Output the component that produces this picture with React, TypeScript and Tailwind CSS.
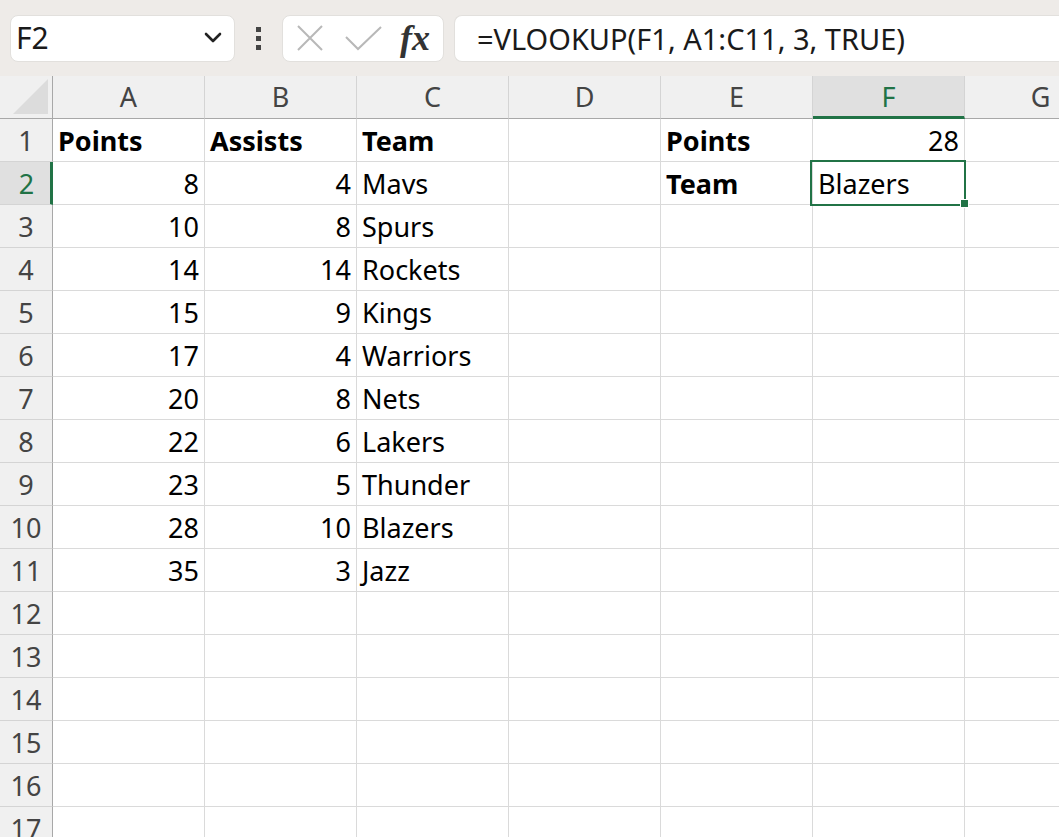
import React from 'react';

const cols = ['A', 'B', 'C', 'D', 'E', 'F', 'G'];

type Cell = { v: string; bold?: boolean; right?: boolean };

const data: Record<string, Cell> = {
  A1: { v: 'Points', bold: true },
  B1: { v: 'Assists', bold: true },
  C1: { v: 'Team', bold: true },
  E1: { v: 'Points', bold: true },
  F1: { v: '28', right: true },
  E2: { v: 'Team', bold: true },
  F2: { v: 'Blazers' },
};

const rowsData: [string, string, string][] = [
  ['8', '4', 'Mavs'],
  ['10', '8', 'Spurs'],
  ['14', '14', 'Rockets'],
  ['15', '9', 'Kings'],
  ['17', '4', 'Warriors'],
  ['20', '8', 'Nets'],
  ['22', '6', 'Lakers'],
  ['23', '5', 'Thunder'],
  ['28', '10', 'Blazers'],
  ['35', '3', 'Jazz'],
];

rowsData.forEach((r, i) => {
  const n = i + 2;
  data['A' + n] = { v: r[0], right: true };
  data['B' + n] = { v: r[1], right: true };
  data['C' + n] = { v: r[2] };
});

const font = { fontFamily: '"Segoe UI", "Noto Sans", "Open Sans", sans-serif' };

function Toolbar() {
  return (
    <div className="flex h-[76px] items-center bg-[#eeebe8] pl-[10px]">
      <div className="flex h-[47px] w-[225px] items-center justify-between rounded-[8px] border border-[#e2e0dd] bg-white pl-[5px] pr-[12px]">
        <span className="text-[30px] leading-none text-[#1a1a1a]">F2</span>
        <svg width="18" height="12" viewBox="0 0 18 12">
          <path d="M2 2 L9 9 L16 2" fill="none" stroke="#222" strokeWidth="2.6" strokeLinecap="round" strokeLinejoin="round" />
        </svg>
      </div>
      <div className="flex w-[47px] flex-col items-center gap-[4px]">
        <span className="block h-[5px] w-[5px] bg-[#444]" />
        <span className="block h-[5px] w-[5px] bg-[#444]" />
        <span className="block h-[5px] w-[5px] bg-[#444]" />
      </div>
      <div className="flex h-[47px] w-[162px] items-center rounded-[8px] border border-[#e2e0dd] bg-white pl-[13px]">
        <svg width="28" height="28" viewBox="0 0 28 28">
          <path d="M2 2 L26 26 M26 2 L2 26" stroke="#b8b8b8" strokeWidth="2" fill="none" />
        </svg>
        <svg width="38" height="28" viewBox="0 0 38 28" className="ml-[21px]">
          <path d="M1 13 L13 25 L36 3" stroke="#b8b8b8" strokeWidth="2" fill="none" />
        </svg>
        <span
          className="ml-[17px] text-[36px] font-bold italic leading-none text-[#333]"
          style={{ fontFamily: '"Liberation Serif", "DejaVu Serif", serif' }}
        >
          fx
        </span>
      </div>
      <div className="ml-[10px] flex h-[47px] flex-1 items-center rounded-l-[8px] border border-r-0 border-[#e2e0dd] bg-white pl-[22px]">
        <span className="text-[29px] leading-none text-[#1a1a1a]">=VLOOKUP(F1, A1:C11, 3, TRUE)</span>
      </div>
    </div>
  );
}

export default function App() {
  const rows = Array.from({ length: 17 }, (_, i) => i + 1);
  return (
    <div className="h-[837px] w-[1059px] overflow-hidden bg-white" style={font}>
      <Toolbar />
      <div className="grid grid-cols-[53px_repeat(7,152px)]">
        {/* corner */}
        <div className="flex h-[43px] items-end justify-end border-b border-r border-[#a8a8a8] bg-[#f0f0f0] pb-[4px] pr-[4px]">
          <div className="h-[35px] w-[35px] bg-[#dcdcdc] [clip-path:polygon(100%_0,100%_100%,0_100%)]" />
        </div>
        {cols.map((c) => (
          <div
            key={c}
            className={
              c === 'F'
                ? 'flex h-[43px] items-center justify-center border-b-[3px] border-r border-b-[#217346] border-r-[#d4d4d4] bg-[#e0e0e0] pt-[3px] text-[27px] text-[#217346]'
                : 'flex h-[43px] items-center justify-center border-b border-r border-b-[#a8a8a8] border-r-[#d4d4d4] bg-[#f0f0f0] pt-[1px] text-[27px] text-[#444]'
            }
          >
            {c}
          </div>
        ))}
        {rows.map((r) => (
          <React.Fragment key={r}>
            <div
              className={
                r === 2
                  ? 'flex h-[43px] items-center justify-center border-b border-r-[3px] border-b-[#d4d4d4] border-r-[#217346] bg-[#e0e0e0] pl-[3px] pt-[2px] text-[27px] text-[#217346]'
                  : 'flex h-[43px] items-center justify-center border-b border-r border-b-[#d4d4d4] border-r-[#a8a8a8] bg-[#f0f0f0] pt-[2px] text-[27px] text-[#444]'
              }
            >
              {r}
            </div>
            {cols.map((c) => {
              const cell = data[c + r];
              const selected = c === 'F' && r === 2;
              return (
                <div
                  key={c}
                  className={
                    'relative flex h-[43px] items-center whitespace-nowrap border-b border-r border-[#dadada] pl-[5px] pr-[5px] pt-[3px] text-[27px] text-black ' +
                    (cell?.right ? 'justify-end ' : 'justify-start ') +
                    (selected ? 'z-10' : '')
                  }
                >
                  {cell && <span className={cell.bold ? 'font-bold' : ''}>{cell.v}</span>}
                  {selected && (
                    <>
                      <div className="pointer-events-none absolute -left-[3px] -top-[2px] h-[46px] w-[156px] border-2 border-[#217346]" />
                      <div className="absolute -bottom-[4px] -right-[5px] h-[9px] w-[9px] border border-white bg-[#217346]" />
                    </>
                  )}
                </div>
              );
            })}
          </React.Fragment>
        ))}
      </div>
    </div>
  );
}
